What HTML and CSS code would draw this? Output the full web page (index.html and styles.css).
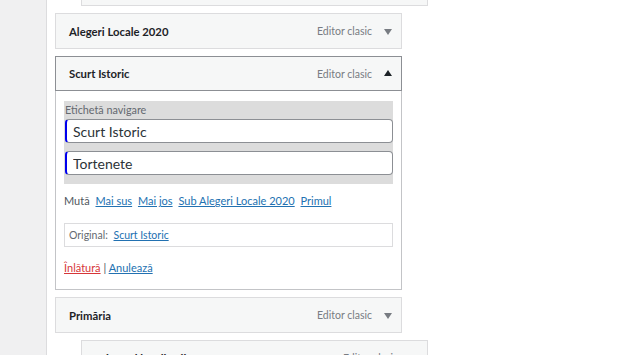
FILE: index.html
```html
<!DOCTYPE html>
<html lang="ro">
<head>
  <meta charset="UTF-8">
  <meta name="viewport" content="width=device-width, initial-scale=1.0">
  <title>Meniuri</title>
  <link rel="stylesheet" href="styles.css">
</head>
<body>
  <div class="rail"></div>

  <main class="menu">
    <div class="item depth-1 cut"></div>

    <div class="item">
      <div class="item-bar">
        <span class="item-title">Alegeri Locale 2020</span>
        <span class="item-type">Editor clasic</span>
        <span class="arrow down"></span>
      </div>
    </div>

    <div class="item open">
      <div class="item-bar">
        <span class="item-title">Scurt Istoric</span>
        <span class="item-type">Editor clasic</span>
        <span class="arrow up"></span>
      </div>
      <div class="item-settings">
        <div class="nav-label">
          <label>Etichetă navigare</label>
          <input class="field" type="text" value="Scurt Istoric">
          <input class="field" type="text" value="Tortenete">
        </div>

        <p class="move">
          Mută
          <a href="#">Mai sus</a>
          <a href="#">Mai jos</a>
          <a href="#">Sub Alegeri Locale 2020</a>
          <a href="#">Primul</a>
        </p>

        <div class="original">
          Original: <a href="#">Scurt Istoric</a>
        </div>

        <div class="actions">
          <a href="#" class="delete">Înlătură</a> <span class="sep">|</span> <a href="#">Anulează</a>
        </div>
      </div>
    </div>

    <div class="item">
      <div class="item-bar">
        <span class="item-title">Primăria</span>
        <span class="item-type">Editor clasic</span>
        <span class="arrow down"></span>
      </div>
    </div>

    <div class="item depth-1">
      <div class="item-bar">
        <span class="item-title">Primarul localității</span>
        <span class="item-type">Editor clasic</span>
        <span class="arrow down"></span>
      </div>
    </div>
  </main>
</body>
</html>
```

FILE: styles.css
```css
body {
  margin: 0;
  display: flex;
  height: 355px;
  overflow: hidden;
  background: #fff;
  font-family: Lato, "Noto Sans", sans-serif;
  font-size: 11px;
  color: #3c434a;
}

.rail {
  width: 46px;
  flex-shrink: 0;
  background: #f0f0f1;
  border-right: 1px solid #dcdcde;
}

.menu {
  padding-left: 8px;
  width: 372px;
}

.item {
  width: 347px;
  margin-bottom: 7px;
}

.item.depth-1 {
  margin-left: 26px;
}

.item.cut {
  height: 6px;
  box-sizing: border-box;
  background: #f6f7f7;
  border: 1px solid #dcdcde;
  border-top: none;
}

.item-bar {
  display: flex;
  align-items: center;
  height: 36px;
  box-sizing: border-box;
  padding: 0 9px 0 13px;
  background: #f6f7f7;
  border: 1px solid #dcdcde;
}

.item.open .item-bar {
  height: 35px;
  border-color: #8c8f94;
}

.item-title {
  flex: 1;
  font-weight: 700;
  font-size: 11.3px;
  color: #1d2327;
}

.item-type {
  color: #787c82;
  font-size: 10.5px;
  margin-right: 12px;
}

.arrow {
  width: 0;
  height: 0;
  border-left: 4px solid transparent;
  border-right: 4px solid transparent;
}

.arrow.down {
  border-top: 6px solid #787c82;
  margin-top: 1px;
}

.arrow.up {
  border-bottom: 6px solid #1d2327;
  margin-top: -2px;
}

.item-settings {
  border: 1px solid #c3c4c7;
  border-top: none;
  padding: 10px 8px 13px 8px;
}

.nav-label {
  background: #dcdcdc;
  padding: 3px 0 9px 1px;
  display: flex;
  flex-direction: column;
  gap: 8px;
}

.nav-label label {
  font-size: 10.8px;
  color: #646970;
  line-height: 12px;
  margin-bottom: -5px;
}

.field {
  height: 24px;
  box-sizing: border-box;
  margin: 0;
  padding: 0 8px 0 6px;
  border: 1px solid #8c8f94;
  border-left: 2px solid #0000ee;
  border-radius: 4px;
  background: #fff;
  font-family: inherit;
  font-size: 14px;
  color: #2c3338;
}

.move {
  margin: 9px 0 0;
  line-height: 16px;
  color: #50575e;
}

.move a {
  margin-left: 3px;
}

a {
  color: #2271b1;
}

.original {
  margin-top: 14px;
  border: 1px solid #dcdcde;
  padding: 4px 4px;
  font-size: 10.5px;
  color: #646970;
  line-height: 14px;
}

.original a {
  margin-left: 3px;
}

.actions {
  margin-top: 13px;
  line-height: 16px;
}

.actions .delete {
  color: #d63638;
}

.sep {
  color: #50575e;
}
```
